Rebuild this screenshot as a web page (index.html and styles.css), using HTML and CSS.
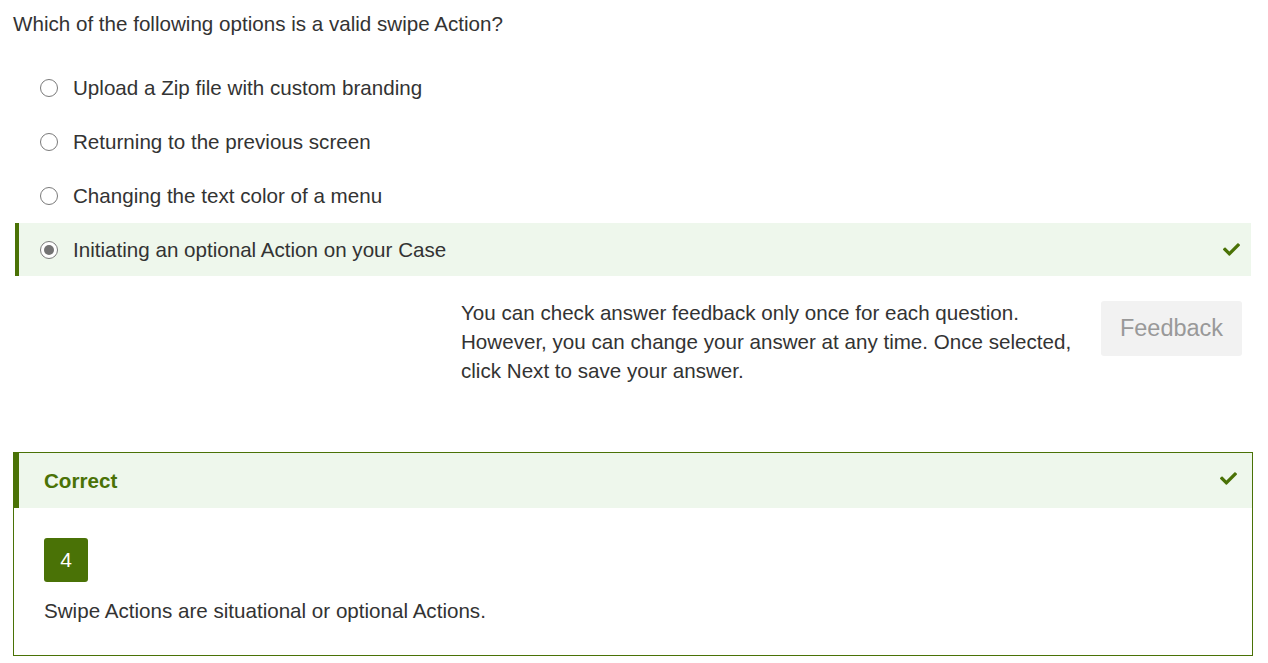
FILE: index.html
```html
<!DOCTYPE html>
<html>
<head>
<meta charset="utf-8">
<link rel="stylesheet" href="styles.css">
</head>
<body>
<div class="page">
  <p class="question">Which of the following options is a valid swipe Action?</p>
  <ul class="options">
    <li class="option"><span class="radio"></span><span class="label">Upload a Zip file with custom branding</span></li>
    <li class="option"><span class="radio"></span><span class="label">Returning to the previous screen</span></li>
    <li class="option"><span class="radio"></span><span class="label">Changing the text color of a menu</span></li>
    <li class="option selected"><span class="radio checked"></span><span class="label">Initiating an optional Action on your Case</span>
      <svg class="check" viewBox="0 0 512 512"><path d="M173.898 439.404l-166.4-166.4c-9.997-9.997-9.997-26.206 0-36.204l36.203-36.204c9.997-9.998 26.207-9.998 36.204 0L192 312.69 432.095 72.596c9.997-9.997 26.207-9.997 36.204 0l36.203 36.204c9.997 9.997 9.997 26.206 0 36.204l-294.4 294.401c-9.998 9.997-26.207 9.997-36.204-.001z"/></svg>
    </li>
  </ul>
  <div class="feedback-row">
    <p class="feedback-note">You can check answer feedback only once for each question. However, you can change your answer at any time. Once selected, click Next to save your answer.</p>
    <button class="feedback-btn">Feedback</button>
  </div>
  <div class="result">
    <div class="result-head">
      <span class="result-title">Correct</span>
      <svg class="check" viewBox="0 0 512 512"><path d="M173.898 439.404l-166.4-166.4c-9.997-9.997-9.997-26.206 0-36.204l36.203-36.204c9.997-9.998 26.207-9.998 36.204 0L192 312.69 432.095 72.596c9.997-9.997 26.207-9.997 36.204 0l36.203 36.204c9.997 9.997 9.997 26.206 0 36.204l-294.4 294.401c-9.998 9.997-26.207 9.997-36.204-.001z"/></svg>
    </div>
    <div class="result-body">
      <div class="badge">4</div>
      <p class="explain">Swipe Actions are situational or optional Actions.</p>
    </div>
  </div>
</div>
</body>
</html>
```

FILE: styles.css
```css
html, body {
  margin: 0;
  padding: 0;
  background: #ffffff;
}
body {
  font-family: "Liberation Sans", Arial, sans-serif;
  color: #333333;
  font-size: 20.6px;
}
.page {
  padding: 12px 15px 0 13px;
}
.question {
  margin: 0;
  line-height: 24px;
}
.options {
  list-style: none;
  margin: 25px 2px 0 2px;
  padding: 0;
}
.option {
  display: flex;
  align-items: center;
  height: 54px;
  padding-left: 25px;
  padding-right: 11px;
  box-sizing: border-box;
}
.option.selected {
  background: #eef7ec;
  border-left: 4px solid #4a7206;
  padding-left: 21px;
  height: 53px;
}
.radio {
  width: 18px;
  height: 18px;
  border: 1px solid #7a7a7a;
  border-radius: 50%;
  box-sizing: border-box;
  background: #fff;
  flex: none;
  position: relative;
}
.radio.checked::after {
  content: "";
  position: absolute;
  left: 3px;
  top: 3px;
  width: 10px;
  height: 10px;
  border-radius: 50%;
  background: #737373;
}
.label {
  margin-left: 15px;
  line-height: 24px;
  flex: 1;
}
.check {
  width: 17px;
  height: 17px;
  fill: #4a7206;
  flex: none;
}
.feedback-row {
  display: flex;
  justify-content: flex-end;
  align-items: flex-start;
  margin-top: 22px;
  padding-right: 11px;
}
.feedback-note {
  margin: 0;
  width: 624px;
  line-height: 29px;
}
.feedback-btn {
  margin-left: 16px;
  margin-top: 3px;
  width: 141px;
  height: 55px;
  border: none;
  border-radius: 3px;
  background: #f2f2f2;
  color: #999999;
  font-family: "Liberation Sans", Arial, sans-serif;
  font-size: 23.5px;
}
.result {
  margin-top: 67px;
  border: 1px solid #4a7206;
  height: 204px;
  box-sizing: border-box;
}
.result-head {
  display: flex;
  align-items: center;
  justify-content: space-between;
  height: 55px;
  background: #eef7ec;
  border-left: 5px solid #4a7206;
  padding: 0 15px 0 25px;
  box-sizing: border-box;
}
.result-head .check {
  margin-top: -5px;
}
.result-title {
  font-weight: bold;
  color: #4a7206;
  line-height: 24px;
}
.result-body {
  padding: 30px 0 0 30px;
}
.badge {
  width: 44px;
  height: 44px;
  background: #4a7206;
  color: #ffffff;
  border-radius: 3px;
  display: flex;
  align-items: center;
  justify-content: center;
  font-size: 21px;
}
.explain {
  margin: 17px 0 0;
  line-height: 24px;
}
```
